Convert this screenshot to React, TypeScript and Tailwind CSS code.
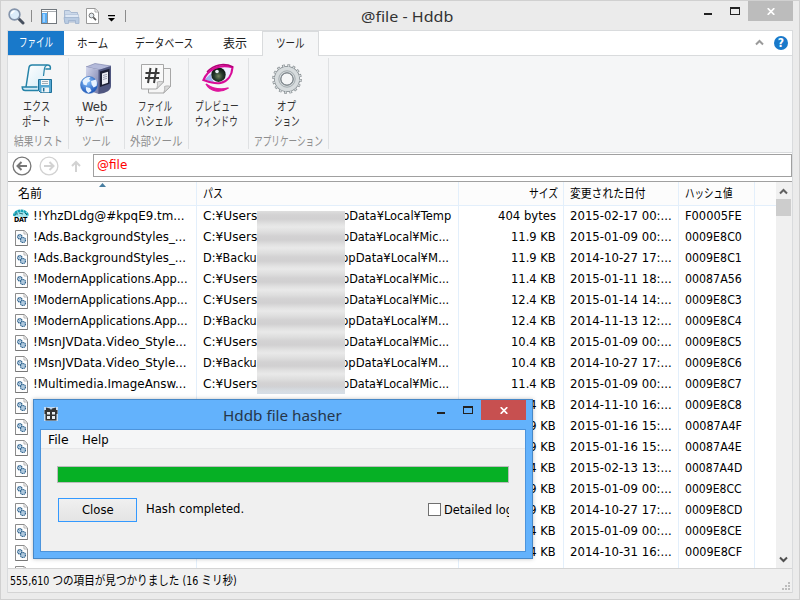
import { useLayoutEffect, useRef, type ReactNode } from 'react';

type FitProps = {
  width: number;
  className?: string;
  children: ReactNode;
};

// Squeezes or stretches a run of text to a fixed width, like a narrow UI font.
const Fit = ({ width, className = '', children }: FitProps) => {
  const ref = useRef<HTMLSpanElement>(null);

  useLayoutEffect(() => {
    const el = ref.current;
    if (!el) return;
    el.style.transform = `scaleX(${width / el.offsetWidth})`;
  });

  return (
    <span className={`inline-flex shrink-0 whitespace-nowrap ${className}`} style={{ width }}>
      <span ref={ref} className="inline-block shrink-0 origin-left">
        {children}
      </span>
    </span>
  );
};

const MagnifierIcon = () => (
  <svg width="17" height="17" viewBox="0 0 17 17" fill="none">
    <path d="M10.5 10.5l4.5 4.5" stroke="#47505e" strokeWidth="3" strokeLinecap="round" />
    <circle cx="6.5" cy="6.5" r="5.4" fill="#dcecfa" stroke="#8494ab" strokeWidth="1.6" />
    <path d="M3.5 6a3.4 3.4 0 013-2.8" stroke="#fff" strokeWidth="1.4" />
  </svg>
);

const PaneIcon = () => (
  <svg width="16" height="15" viewBox="0 0 16 15">
    <rect x=".5" y=".5" width="15" height="14" fill="#fff" stroke="#71777d" />
    <path d="M1 2.5h14" stroke="#a9adb1" />
    <rect x="1" y="4" width="5" height="10" fill="#58adf5" />
    <rect x="2" y="5" width="2" height="8" fill="#9bd0ff" />
    <path d="M6.5 3v11" stroke="#8a9096" />
  </svg>
);

const FolderIcon = () => (
  <svg width="17" height="15" viewBox="0 0 17 15">
    <path d="M1.5 13V1.5h5l1.5 2h6.500V13z" fill="#cbd8e9" stroke="#a9b9d0" />
    <path d="M2 5.500h13.500V11H2z" fill="#dfe8f4" stroke="#b0c0d8" strokeWidth=".7" />
    <path d="M1 8.500h15v6h-3.500v-3h-7v3H2z" fill="#b9cbe2" stroke="#9db1cd" strokeWidth=".8" />
  </svg>
);

const PreviewPageIcon = () => (
  <svg width="13" height="16" viewBox="0 0 13 16" fill="none">
    <path d="M.5.5h8.7l3.300 3.300v11.700H.5z" fill="#fff" stroke="#999" />
    <path d="M9 1v3h3" stroke="#aaa" />
    <circle cx="5.500" cy="7.500" r="2.400" fill="#e3e9ee" stroke="#777" />
    <path d="M7.400 9.400l2.600 2.700" stroke="#555" strokeWidth="1.600" />
  </svg>
);

const ExportIcon = () => (
  <svg width="32" height="32" viewBox="0 0 32 32" fill="none">
    <defs>
      <linearGradient id="paper" x1="0" y1="0" x2="1" y2="1">
        <stop stopColor="#fff" />
        <stop offset="1" stopColor="#d2eaf6" />
      </linearGradient>
    </defs>
    <path d="M8.500 2h18c-2 1-3 3-3.300 5l-3 19H4.800z" fill="url(#paper)" />
    <path d="M5 24L8 4.500C8.300 2.800 9.500 2 11 2h15.500c2.300 0 3.300 1.400 2.800 4h-5" stroke="#2583a8" strokeWidth="1.500" />
    <path d="M26.300 2c-2 .6-2.800 2.400-3 4.500L22.500 13" stroke="#2583a8" strokeWidth="1.200" />
    <path d="M16.500 24H1.200c.1 2.200 1 3.500 3 3.500h13" fill="#d2eaf6" stroke="#2583a8" strokeWidth="1.500" />
    <path d="M17.500 16.500h13v13H19.500l-2-2z" fill="#57a8d2" stroke="#1d6f98" />
    <path d="M20 17h8v5h-8z" fill="#f4f6f7" />
    <path d="M21 18.500h6M21 20.500h6" stroke="#8a9ba5" strokeWidth=".8" />
    <path d="M20.500 24.500h7.500v4.800h-7.500z" fill="#eef4f7" />
    <path d="M22.700 25v3.500" stroke="#1d6f98" strokeWidth="1.500" />
  </svg>
);

const ServerIcon = () => (
  <svg width="34" height="34" viewBox="0 0 34 34">
    <defs>
      <linearGradient id="side" x1="0" y1="0" x2="1" y2="1">
        <stop stopColor="#d3d7ee" />
        <stop offset="1" stopColor="#7178a5" />
      </linearGradient>
      <radialGradient id="globe" cx=".4" cy=".3" r=".7">
        <stop stopColor="#8fc8ff" />
        <stop offset="1" stopColor="#1a54b8" />
      </radialGradient>
    </defs>
    <path d="M7 5l9-3.500L32 4l-10 4z" fill="#b4bada" stroke="#737ba6" strokeWidth=".6" />
    <path d="M7 5l13 3v24l-13-4z" fill="url(#side)" />
    <path d="M19.500 8L32 4v20c0 4-4 7-12.500 8z" fill="#505780" />
    <path d="M21 9.500l9.500-2.800v15L21 25z" fill="#1c2035" />
    <path d="M23 11.500l6-1.800v11l-6 2z" fill="#e9ebf2" />
    <path d="M24 13.500l4-1.200M24 15.500l4-1.200M24 17.500l4-1.200" stroke="#8b90a4" strokeWidth=".8" />
    <circle cx="10" cy="23" r="8.500" fill="url(#globe)" stroke="#356cba" strokeWidth=".5" />
    <path d="M3.500 19c2-3.500 5-4.500 8-4l-1.500 2 1.500 2-3 1.500-1 3-3-1zM12 19l5-1.500c1 2 1.200 4 .6 6.500l-3 1.500-2-3zM7 25l4 1 1.500 3-3 2c-2-1-3-3-2.500-6z" fill="#e7f3ff" />
  </svg>
);

const HashIcon = () => (
  <svg width="32" height="32" viewBox="0 0 32 32" fill="none">
    <path d="M8.500 5.500h22v18l-7 6.500h-15z" fill="#f6f6f6" stroke="#a7a7a7" />
    <path d="M30.500 23.500c-2-.8-4-.8-6 0 .5 2 .2 4-1 6.500z" fill="#d9d9d9" stroke="#a7a7a7" strokeWidth=".8" />
    <path d="M1.500 1.500h22V19l-7 7h-15z" fill="#f9f9f9" stroke="#a7a7a7" />
    <path d="M23.500 19c-2.200-.8-4.200-.8-6.300 0 .5 2.500.3 4.500-.7 7z" fill="#dcdcdc" stroke="#a7a7a7" strokeWidth=".8" />
    <path d="M10.500 5L8 20M16.500 5L14 20M5.500 10h14M5 15h14" stroke="#3b3b3b" strokeWidth="2" />
  </svg>
);

const EyeIcon = () => (
  <svg width="32" height="32" viewBox="0 0 32 32" fill="none">
    <defs>
      <radialGradient id="iris" cx=".5" cy=".6" r=".6">
        <stop stopColor="#72845f" />
        <stop offset=".5" stopColor="#253a2b" />
        <stop offset="1" stopColor="#0b100e" />
      </radialGradient>
    </defs>
    <path d="M2 17C7 7 16 1 30 4.500c-1 7-5 14.500-13 15.500-6 .8-10-1-15-3z" fill="#efeeff" />
    <path d="M3 16.500c1.500-2 4-4.500 6-5.500 0 3 1 6 3 8-3 0-6-1-9-2.500z" fill="#9eb0ef" />
    <circle cx="16.500" cy="11.700" r="7.200" fill="url(#iris)" />
    <circle cx="15" cy="8.500" r="1.800" fill="#e7eef5" />
    <path d="M1.500 17C6 6.500 17 .5 30.500 4.300 30 12 26 18.500 18.500 20 12 21.200 7 19 1.500 17z" stroke="#d80c97" strokeWidth="2.200" />
    <path d="M5 9C12 1.500 22-.5 31 4" stroke="#b40078" strokeWidth="1.500" />
    <path d="M4 21c4 7.500 14 9.500 22.500 4-7 1.800-15 1.200-22.500-4z" fill="#df169d" stroke="#df169d" strokeWidth="1.300" />
  </svg>
);

const GearIcon = () => (
  <svg width="32" height="32" viewBox="0 0 32 32" fill="none">
    <circle cx="16" cy="16" r="13.300" stroke="#848a8e" strokeWidth="3" strokeDasharray="2.700 2.522" />
    <circle cx="16" cy="16" r="9.500" stroke="#7f878c" strokeWidth="7" />
    <circle cx="16" cy="16" r="9.500" stroke="#d7dcde" strokeWidth="5.500" />
    <circle cx="16" cy="16" r="13.300" stroke="#d0d6d8" strokeWidth="2" strokeDasharray="1.500 3.722" strokeDashoffset="-.6" />
    <circle cx="16" cy="16" r="8.200" stroke="#a4acb0" />
    <circle cx="16" cy="16" r="6" stroke="#70797f" strokeWidth=".8" />
  </svg>
);

const FileIcon = () => (
  <svg width="13" height="16" viewBox="0 0 13 16" fill="none" className="ml-[7px] shrink-0">
    <path d="M.5.5h8.700l3.300 3.300v11.700H.5z" fill="#fdfdfd" stroke="#8c8c8c" />
    <path d="M9 1v3h3" stroke="#b5b5b5" />
    <path d="M.5 15.500h12" stroke="#777" />
    <circle cx="4.800" cy="6.800" r="2.100" fill="#dcebf8" stroke="#2f648f" strokeWidth="1.400" strokeDasharray="1.300 .4" />
    <circle cx="8" cy="10" r="2.400" fill="#dcebf8" stroke="#2f648f" strokeWidth="1.400" strokeDasharray="1.300 .4" />
    <path d="M4.300 6.800h1M7.500 10h1" stroke="#2f648f" />
  </svg>
);

const DatIcon = () => (
  <span className="relative ml-[5px] h-4 w-4 shrink-0">
    <svg width="16" height="16" viewBox="0 0 16 16" fill="none" className="absolute">
      <path d="M1.500 8C2 3 5 1.500 8.500 1.500S15 4 15 8v5H2z" fill="#a5e6ee" />
      <path d="M1 7C2 2.500 5 1.700 8 1.700S14 3 15 7" stroke="#19a5b9" strokeWidth="2.600" strokeDasharray="2.600 .5" />
      <path d="M2 5h3M6 4l4 1M12 4l2 2" stroke="#064f5c" strokeWidth=".8" />
      <rect x="1" y="8" width="15" height="7.500" rx="1" fill="#fff" />
    </svg>
    <span className="absolute top-[7px] left-px font-['DejaVu_Sans_Condensed'] text-[7px] leading-[9px] font-bold tracking-[-.3px] text-black">
      DAT
    </span>
  </span>
);

const GiftIcon = () => (
  <svg width="14" height="15" viewBox="0 0 14 15">
    <path d="M0 1h14v14H0z" fill="#d9e6f2" opacity=".8" />
    <path d="M.5 4h13v4h-1v6.500h-11V8h-1z" fill="#333" />
    <path d="M2 1.500l4 1 1 1.500 1-1.500 4-1V4H2z" fill="#333" />
    <path d="M3 6h3v2.500H3zM8 6h3v2.500H8zM3 10h3v3H3zM8 10h3v3H8z" fill="#e8edf2" />
  </svg>
);

const CrossIcon = () => (
  <svg width="8" height="7" viewBox="0 0 8 7">
    <path d="M.7.2l6.600 6.600M7.300.2L.7 6.800" stroke="#fff" strokeWidth="1.700" />
  </svg>
);

const BackIcon = ({ color, flip = false }: { color: string; flip?: boolean }) => (
  <svg width="20" height="20" viewBox="0 0 20 20" fill="none" stroke={color} className={flip ? '-scale-x-100' : ''}>
    <circle cx="10" cy="10" r="8.900" strokeWidth="1.300" />
    <path d="M15 10H6M9.500 6L5.500 10l4 4" strokeWidth="2" />
  </svg>
);

const tabs = [
  { label: 'ホーム', width: 31, pad: 'ml-[13px]' },
  { label: 'データベース', width: 58, pad: 'ml-[27px]' },
  { label: '表示', width: 24, pad: 'ml-[30px]' },
];

const groups = [
  { box: 'w-[61px]', icon: <ExportIcon />, iconBox: 'pr-0.5', lines: [['エクス', 27], ['ポート', 29]], title: '結果リスト', width: 49 },
  { box: 'w-14', icon: <ServerIcon />, iconBox: 'pr-0.5', lines: [['Web', 25], ['サーバー', 39]], title: 'ツール', width: 29 },
  { box: 'w-16', icon: <HashIcon />, iconBox: 'pr-0.5', lines: [['ファイル', 34], ['ハシェル', 37]], title: '外部ツール', width: 53 },
  { box: 'w-[60px]', icon: <EyeIcon />, iconBox: 'pr-0.5', lines: [['プレビュー', 44], ['ウィンドウ', 43]], title: '', width: 0 },
  { box: 'w-20', icon: <GearIcon />, iconBox: 'pr-[3px]', lines: [['オプ', 19], ['ション', 26]], title: 'アプリケーション', width: 69 },
] as const;

type Row = {
  name: string;
  nameWidth: number;
  drive: 'C' | 'D' | '';
  tail?: string;
  size: string;
  date: string;
  hash: string;
};

const rows: Row[] = [
  { name: '!!YhzDLdg@#kpqE9.tm...', nameWidth: 151, drive: 'C', tail: 'pData¥Local¥Temp', size: '404 bytes', date: '2015-02-17 00:...', hash: 'F00005FE' },
  { name: '!Ads.BackgroundStyles_...', nameWidth: 153, drive: 'C', size: '11.9 KB', date: '2015-01-09 00:...', hash: '0009E8C0' },
  { name: '!Ads.BackgroundStyles_...', nameWidth: 153, drive: 'D', size: '11.9 KB', date: '2014-10-27 17:...', hash: '0009E8C1' },
  { name: '!ModernApplications.App...', nameWidth: 155, drive: 'C', size: '11.4 KB', date: '2015-01-11 18:...', hash: '00087A56' },
  { name: '!ModernApplications.App...', nameWidth: 155, drive: 'C', size: '12.4 KB', date: '2015-01-14 14:...', hash: '0009E8C3' },
  { name: '!ModernApplications.App...', nameWidth: 155, drive: 'D', size: '12.4 KB', date: '2014-11-13 12:...', hash: '0009E8C4' },
  { name: '!MsnJVData.Video_Style...', nameWidth: 154, drive: 'C', size: '10.4 KB', date: '2015-01-09 00:...', hash: '0009E8C5' },
  { name: '!MsnJVData.Video_Style...', nameWidth: 154, drive: 'D', size: '10.4 KB', date: '2014-10-27 17:...', hash: '0009E8C6' },
  { name: '!Multimedia.ImageAnsw...', nameWidth: 153, drive: 'C', size: '11.4 KB', date: '2015-01-09 00:...', hash: '0009E8C7' },
  { name: '', nameWidth: 0, drive: '', size: '11.4 KB', date: '2014-11-10 16:...', hash: '0009E8C8' },
  { name: '', nameWidth: 0, drive: '', size: '11.9 KB', date: '2015-01-16 15:...', hash: '00087A4F' },
  { name: '', nameWidth: 0, drive: '', size: '11.9 KB', date: '2015-01-16 15:...', hash: '00087A4E' },
  { name: '', nameWidth: 0, drive: '', size: '11.4 KB', date: '2015-02-13 13:...', hash: '00087A4D' },
  { name: '', nameWidth: 0, drive: '', size: '11.9 KB', date: '2015-01-09 00:...', hash: '0009E8CC' },
  { name: '', nameWidth: 0, drive: '', size: '11.9 KB', date: '2014-10-27 17:...', hash: '0009E8CD' },
  { name: '', nameWidth: 0, drive: '', size: '11.4 KB', date: '2015-01-09 00:...', hash: '0009E8CE' },
  { name: '!ModernApplications.App...', nameWidth: 155, drive: 'D', size: '11.4 KB', date: '2014-10-31 16:...', hash: '0009E8CF' },
];

const TitleBar = () => (
  <div className="relative flex h-[29px] shrink-0 items-start">
    <div className="mt-1.5 ml-[7px] flex h-[18px] items-center">
      <MagnifierIcon />
      <span className="ml-[6px] h-3 w-px bg-[#8b8b8b]" />
      <span className="ml-[9px]"><PaneIcon /></span>
      <span className="ml-1.5"><FolderIcon /></span>
      <span className="ml-1.5"><PreviewPageIcon /></span>
      <svg width="7" height="7" viewBox="0 0 7 7" className="mt-1 ml-[9px]">
        <path d="M0 0h7v1.200H0zM0 3h7L3.500 6.500z" fill="#000" />
      </svg>
      <span className="ml-2.5 h-3 w-px bg-[#8b8b8b]" />
    </div>
    <div className="absolute top-1 left-[360px]">
      <Fit width={92} className="font-['Noto_Sans'] text-[15px] leading-[22px] text-[#333]">@file - Hddb</Fit>
    </div>
    <div className="ml-auto flex items-start">
      <span className="mt-3 h-0.5 w-2 bg-[#222]" />
      <span className="mt-1.5 ml-[18px] h-2 w-2.5 border border-t-2 border-[#222]" />
      <span className="ml-2 flex h-5 w-[45px] items-center justify-center bg-[#bcbcbc]"><CrossIcon /></span>
      <span className="w-1.5" />
    </div>
  </div>
);

const TabBar = () => (
  <div className="flex h-[25px] shrink-0 border-b border-[#d9dbdd] bg-white text-[12.5px] leading-[25px] text-[#222]">
    <div className="flex h-6 w-14 justify-center bg-[#1979ca] leading-6 text-white">
      <Fit width={34}>ファイル</Fit>
    </div>
    {tabs.map((tab) => (
      <Fit key={tab.label} width={tab.width} className={tab.pad}>{tab.label}</Fit>
    ))}
    <div className="ml-[15px] flex h-[25px] w-[57px] justify-center border-x border-t border-[#d9dbdd] bg-[#f5f6f7] leading-6">
      <Fit width={29}>ツール</Fit>
    </div>
    <div className="ml-auto flex items-center pr-1">
      <svg width="9" height="7" viewBox="0 0 9 7" fill="none" className="mb-px">
        <path d="M1 5.500l3.500-3.500L8 5.500" stroke="#9a9a9a" strokeWidth="2" />
      </svg>
      <span className="ml-2.5 flex h-3.5 w-3.5 items-center justify-center rounded-full bg-[#1979ca] text-[12px] leading-none font-bold text-white">?</span>
    </div>
  </div>
);

const Ribbon = () => (
  <div className="flex h-[97px] shrink-0 border-b border-[#d9dbdd] bg-[#f5f6f7] pt-0.5">
    {groups.map((group) => (
      <div key={group.lines[0][0]} className={`${group.box} flex h-[91px] flex-col items-center border-r border-[#dfe1e3]`}>
        <div className={`${group.iconBox} mt-1 flex h-[34px] items-center`}>{group.icon}</div>
        <div className="mt-[3px] flex flex-col items-center pr-1 text-[12.5px] leading-[15px] text-[#333]">
          {group.lines.map(([text, width]) => (
            <Fit key={text} width={width}>{text}</Fit>
          ))}
        </div>
        {group.title && (
          <Fit width={group.width} className="mt-[5px] text-[12.5px] leading-[15px] text-[#8e8e8e]">{group.title}</Fit>
        )}
      </div>
    ))}
  </div>
);

const SearchRow = () => (
  <div className="flex h-[29px] shrink-0 items-center border-b border-[#a0a0a0] bg-white">
    <span className="mb-0.5 ml-1 flex items-center">
      <BackIcon color="#777" />
      <span className="ml-[7px]"><BackIcon color="#d2d2d2" flip /></span>
      <svg width="10" height="13" viewBox="0 0 10 13" fill="none" className="ml-3" stroke="#d2d2d2" strokeWidth="2">
        <path d="M5 12V2M1 6l4-4 4 4" />
      </svg>
    </span>
    <div className="mb-[3px] ml-3 flex h-[23px] flex-1 border border-[#a0a0a0] pl-[3px]">
      <Fit width={30} className="text-[12px] leading-5 text-[#f00]">@file</Fit>
    </div>
  </div>
);

const cell = 'flex shrink-0 border-r border-[#e3effb]';

const HeaderRow = () => (
  <div className="relative flex h-6 shrink-0 border-b border-[#e3effb] bg-[#fcfcfc] text-[12.5px] leading-6 text-black">
    <div className={`${cell} w-[189px] pl-2.5`}><Fit width={24}>名前</Fit></div>
    <div className={`${cell} w-[262px] pl-[6px]`}><Fit width={20}>パス</Fit></div>
    <div className={`${cell} w-[105px] justify-end pr-[5px]`}><Fit width={29}>サイズ</Fit></div>
    <div className={`${cell} w-[115px] pl-1.5`}><Fit width={76}>変更された日付</Fit></div>
    <div className={`${cell} w-[76px] pl-1.5`}><Fit width={48}>ハッシュ値</Fit></div>
    <svg width="7" height="4" viewBox="0 0 7 4" className="absolute top-px left-[91px]">
      <path d="M0 4l3.500-4L7 4z" fill="#477da0" />
    </svg>
  </div>
);

const TableRow = ({ row, first }: { row: Row; first: boolean }) => (
  <div className="flex h-[21px] shrink-0 items-center leading-[20px]">
    <div className="flex w-[189px] items-center">
      {first ? <DatIcon /> : <FileIcon />}
      {row.name && <Fit width={row.nameWidth} className={first ? 'ml-1 pb-px' : 'ml-[5px] pb-px'}>{row.name}</Fit>}
    </div>
    <div className="flex w-[262px] pb-px pl-1.5">
      {row.drive === 'C' && (
        <>
          <Fit width={54}>C:¥Users</Fit>
          <Fit width={row.tail ? 109 : 107} className="ml-[85px]">{row.tail ?? 'pData¥Local¥Mic...'}</Fit>
        </>
      )}
      {row.drive === 'D' && (
        <>
          <Fit width={61}>D:¥Backup</Fit>
          <Fit width={108} className="ml-[77px]">ppData¥Local¥M...</Fit>
        </>
      )}
    </div>
    <div className="flex w-[105px] justify-end pr-2 pb-px">
      <Fit width={first ? 58 : 45}>{row.size}</Fit>
    </div>
    <div className="flex w-[115px] pb-px pl-1.5"><Fit width={102}>{row.date}</Fit></div>
    <div className="flex w-[76px] pb-px pl-1.5"><Fit width={57}>{row.hash}</Fit></div>
  </div>
);

const ScrollBar = () => (
  <div className="flex w-4 shrink-0 flex-col items-center bg-[#f0f0f0] pr-px">
    <svg width="9" height="7" viewBox="0 0 9 7" fill="none" className="mt-1.5">
      <path d="M1 5.500L4.500 2 8 5.500" stroke="#606060" strokeWidth="2" />
    </svg>
    <span className="mt-1 h-[17px] w-full bg-[#cdcdcd]" />
    <svg width="9" height="7" viewBox="0 0 9 7" fill="none" className="mt-auto mb-[5px]">
      <path d="M1 1.500L4.500 5 8 1.500" stroke="#505050" strokeWidth="2" />
    </svg>
  </div>
);

const FileTable = () => (
  <div className="relative flex h-[386px] shrink-0 overflow-hidden bg-white">
    <div className="flex flex-1 flex-col">
      <HeaderRow />
      <div className="relative flex-1 text-[12.5px] text-black">
        <div className="absolute inset-0 flex">
          <span className={`${cell} w-[189px]`} />
          <span className={`${cell} w-[262px]`} />
          <span className={`${cell} w-[105px]`} />
          <span className={`${cell} w-[115px]`} />
          <span className={`${cell} w-[76px]`} />
        </div>
        <div className="relative">
          {rows.map((row, i) => (
            <TableRow key={row.hash} row={row} first={i === 0} />
          ))}
          <div className="mt-[3px]"><FileIcon /></div>
        </div>
        <div className="absolute top-[5px] left-[249px] h-[183px] w-[88px] bg-[repeating-linear-gradient(#dedede_0px,#d3d2d3_4px,#d1d0d1_8px,#e2e2e2_13px,#e9e9e9_16px,#dedede_21px)]">
          <div className="h-full bg-[linear-gradient(#e4e4e400_95%,#ccd9e6aa)]" />
        </div>
      </div>
    </div>
    <ScrollBar />
  </div>
);

const StatusBar = () => (
  <div className="relative flex h-[25px] shrink-0 border-y border-[#d4d4d4] bg-[#f0f0f0] pl-0.5 text-[12.5px] leading-[23px] text-black">
    <Fit width={227}>555,610 つの項目が見つかりました (16 ミリ秒)</Fit>
    <svg width="8" height="8" viewBox="0 0 8 8" className="absolute right-0.5 bottom-0.5" fill="#bdbdbd">
      <path d="M6 0h2v2H6zM3 3h2v2H3zM6 3h2v2H6zM0 6h2v2H0zM3 6h2v2H3zM6 6h2v2H6z" />
    </svg>
  </div>
);

const HasherDialog = () => (
  <div className="absolute top-[398px] left-[32px] flex h-[160px] w-[500px] flex-col border border-[#4788c7] bg-[#63b2fc] px-1.5 pb-1.5 shadow-[0_0_4px_rgba(0,0,0,.25)]">
    <div className="relative flex h-[29px] shrink-0 items-start">
      <span className="mt-1.5 ml-1"><GiftIcon /></span>
      <div className="absolute top-1 left-[183px]">
        <Fit width={119} className="font-['Noto_Sans'] text-[15px] leading-[22px] text-[#26364a]">Hddb file hasher</Fit>
      </div>
      <div className="ml-auto flex items-start">
        <span className="mt-3 h-0.5 w-2 bg-[#222]" />
        <span className="mt-1.5 ml-[18px] h-2 w-2.5 border border-t-2 border-[#222]" />
        <span className="ml-2 flex h-5 w-[45px] items-center justify-center bg-[#c75050]"><CrossIcon /></span>
      </div>
    </div>
    <div className="flex flex-1 flex-col border border-[#4c94dc] bg-[#f0f0f0] text-[12.5px] text-black">
      <div className="flex h-[19px] shrink-0 border-b border-[#e6e7e9] bg-[#f5f6f7] pl-[7px] leading-[19px]">
        <Fit width={21}>File</Fit>
        <Fit width={27} className="ml-[13px]">Help</Fit>
      </div>
      <div className="mx-4 mt-[17px] h-[17px] border border-[#bcbcbc] bg-[#06b025]" />
      <div className="mt-[15px] ml-[17px] flex h-6">
        <button type="button" className="flex h-6 w-[79px] items-center justify-center border border-[#3399ff] bg-linear-to-b from-[#f0f0f0] to-[#e4e4e4]">
          <Fit width={32}>Close</Fit>
        </button>
        <Fit width={98} className="ml-[9px] leading-[21px]">Hash completed.</Fit>
        <span className="mt-[5px] ml-[184px] h-[13px] w-[13px] border border-[#707070] bg-white" />
        <span className="ml-[3px] flex w-[65px] overflow-hidden leading-[23px]">
          <Fit width={69}>Detailed log</Fit>
        </span>
      </div>
    </div>
  </div>
);

const App = () => (
  <div className="relative flex h-[600px] w-[800px] flex-col overflow-hidden border border-[#d0d0d0] bg-[#ebebeb] font-['DejaVu_Sans_Condensed','DejaVu_Sans','Noto_Sans_CJK_JP',sans-serif] [font-stretch:condensed]">
    <TitleBar />
    <div className="mx-1.5 flex flex-col border-x border-t border-[#d9dbdd]">
      <TabBar />
      <Ribbon />
      <SearchRow />
      <FileTable />
      <StatusBar />
    </div>
    <HasherDialog />
  </div>
);

export default App;
